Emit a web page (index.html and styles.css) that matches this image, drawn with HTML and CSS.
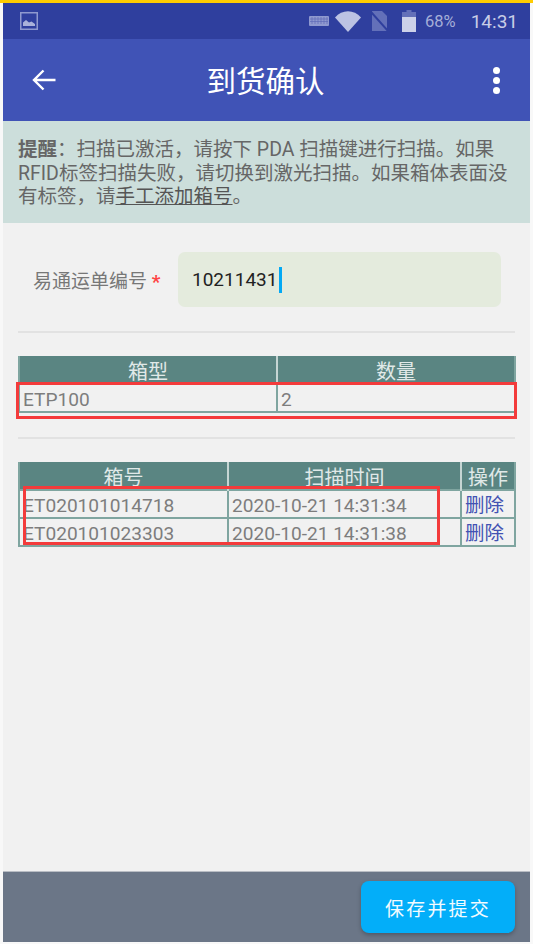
FILE: index.html
```html
<!DOCTYPE html>
<html lang="zh-CN">
<head>
<meta charset="UTF-8">
<title>到货确认</title>
<link rel="stylesheet" href="styles.css">
</head>
<body>

<div class="frame">

    <div class="status-bar">
        <svg class="ic-picture" width="18" height="18" viewBox="0 0 18 18">
            <rect x="0.75" y="0.75" width="16.5" height="16.5" fill="none" stroke="#8f99cf" stroke-width="1.5"/>
            <path d="M3 14V10.5L6 8L9 10.5L11.5 9.5L15 12V14Z" fill="#a9b1da"/>
        </svg>
        <div class="status-right">
            <svg class="ic-keyboard" width="20" height="10" viewBox="0 0 20 10">
                <rect width="20" height="10" rx="1" fill="#8f99cf"/>
                <path d="M1 3H19M1 5.5H19M3 1V8M6 1V8M9 1V8M12 1V8M15 1V8M18 1V8" stroke="#5e6bb7" stroke-width="0.7"/>
            </svg>
            <svg class="ic-wifi" width="26" height="21" viewBox="0 0 26 21">
                <path d="M0 6.5C7 -1.8 19 -1.8 26 6.5L13 21Z" fill="#bcc3e3"/>
            </svg>
            <svg class="ic-sim" width="17" height="20" viewBox="0 0 17 20">
                <path d="M1 0H11L16 5V20H1Z" fill="#6370b9"/>
                <path d="M0 1L17 20" stroke="#2f3f9e" stroke-width="2"/>
            </svg>
            <svg class="ic-battery" width="14" height="22" viewBox="0 0 14 22">
                <path d="M4.5 0H9.5V2H14V22H0V2H4.5Z" fill="#6370b9"/>
                <rect y="7" width="14" height="15" fill="#ccd1e9"/>
            </svg>
            <span class="battery-text">68%</span>
            <span class="clock">14:31</span>
        </div>
    </div>

    <div class="app-bar">
        <svg class="ic-back" width="24" height="22" viewBox="0 0 24 22">
            <path d="M23.5 11H2M11.5 1.5L2 11L11.5 20.5" fill="none" stroke="#fff" stroke-width="2.4"/>
        </svg>
        <h1>到货确认</h1>
        <div class="more">
            <span></span><span></span><span></span>
        </div>
    </div>

    <div class="notice">
        <b>提醒</b>&#xFF1A;扫描已激活&#xFF0C;请按下 PDA 扫描键进行扫描。如果<br>RFID标签扫描失败&#xFF0C;请切换到激光扫描。如果箱体表面没<br>有标签&#xFF0C;请<u>手工添加箱号</u>。
    </div>

    <div class="content">

        <div class="form-row">
            <label>易通运单编号 <em>*</em></label>
            <div class="input"><span>10211431</span><i class="caret"></i></div>
        </div>

        <div class="line line-a"></div>

        <div class="table-wrap">
            <table class="grid">
                <colgroup><col class="c-type"><col></colgroup>
                <tr><th><div>箱型</div></th><th><div>数量</div></th></tr>
                <tr><td>ETP100</td><td>2</td></tr>
            </table>
            <div class="mark mark-a"></div>
        </div>

        <div class="line line-b"></div>

        <div class="table-wrap">
            <table class="grid">
                <colgroup><col class="c-no"><col class="c-time"><col></colgroup>
                <tr><th><div>箱号</div></th><th><div>扫描时间</div></th><th><div>操作</div></th></tr>
                <tr><td>ET020101014718</td><td>2020-10-21 14:31:34</td><td><a>删除</a></td></tr>
                <tr><td>ET020101023303</td><td>2020-10-21 14:31:38</td><td><a>删除</a></td></tr>
            </table>
            <div class="mark mark-b"></div>
        </div>

    </div>

    <div class="footer">
        <button>保存并提交</button>
    </div>

</div>

</body>
</html>
```

FILE: styles.css
```css
*{
    box-sizing:border-box;
}

html,body{
    margin:0;
    height:944px;
    overflow:hidden;
}

body{
    background:#f8f8f8;
    border-top:3px solid #ffcc00;
    padding:0 3px;
    font-family:"Roboto","Noto Sans CJK SC",sans-serif;
}

.frame{
    height:939px;
    display:flex;
    flex-direction:column;
    background:#f1f1f1;
}

/* status bar */
.status-bar{
    height:36px;
    flex:none;
    background:#2f3f9e;
    display:flex;
    align-items:center;
    justify-content:space-between;
    padding:0 12px 0 17px;
}

.status-right{
    display:flex;
    align-items:center;
}

.ic-keyboard{ margin-right:6px; }
.ic-wifi{ margin-right:10px; }
.ic-sim{ margin-right:14px; }
.ic-battery{ margin-right:9px; }

.battery-text{
    font-size:16.5px;
    color:#a5aed8;
    margin-right:15px;
}

.clock{
    font-size:19px;
    color:#c8cde6;
}

/* app bar */
.app-bar{
    height:82px;
    flex:none;
    background:#4053b6;
    display:flex;
    align-items:center;
    justify-content:space-between;
    padding:0 30px 0 29px;
}

.app-bar h1{
    margin:0 18px 3px 0;
    font-size:29.5px;
    font-weight:400;
    color:#fff;
}

.more{
    display:flex;
    flex-direction:column;
    gap:3px;
}

.more span{
    width:7px;
    height:7px;
    border-radius:50%;
    background:#fff;
}

/* notice */
.notice{
    height:102px;
    flex:none;
    background:#ccdedb;
    color:#666;
    font-size:19.5px;
    line-height:23.5px;
    padding:17px 0 0 15px;
    white-space:nowrap;
}

.notice b{
    font-weight:700;
}

.notice u{
    color:#555;
}

/* content */
.content{
    flex:1;
    padding:29px 14px 0;
}

.form-row{
    display:flex;
    align-items:center;
    height:55px;
}

.form-row label{
    width:161px;
    padding-left:16px;
    font-size:19px;
    color:#777;
    white-space:nowrap;
}

.form-row em{
    color:#f44;
    font-style:normal;
    font-weight:700;
}

.input{
    width:323px;
    height:55px;
    background:#e4ebdd;
    border-radius:7px;
    display:flex;
    align-items:center;
    padding-left:14px;
    font-size:19px;
    color:#222;
}

.caret{
    width:2.5px;
    height:26px;
    margin-left:2px;
    background:#03a9f4;
}

.line{
    height:2px;
    background:#e2e2e2;
    margin-left:1px;
    margin-right:1px;
}

.line-a{ margin-top:24px; margin-bottom:23px; }
.line-b{ margin-top:24px; margin-bottom:23px; }

/* tables */
.table-wrap{
    position:relative;
    margin-left:1px;
    width:498px;
}

.grid{
    width:100%;
    border-collapse:collapse;
    table-layout:fixed;
    border:2px solid #7fa5a0;
    border-top:0;
}

.c-type{ width:258px; }
.c-no{ width:209px; }
.c-time{ width:233px; }

.grid th{
    height:27px;
    padding:0;
    background:#5a8582;
    border-left:2px solid #c5d5d3;
    font-weight:400;
    font-size:20px;
    color:#e0e9e8;
}

.grid th:first-child{
    border-left:0;
}

.grid th div{
    height:27px;
    line-height:32px;
    overflow:hidden;
}

.grid td{
    height:28px;
    padding:3px 0 0 3px;
    border:2px solid #7fa5a0;
    font-size:19.1px;
    line-height:23px;
    color:#7d7d7d;
    white-space:nowrap;
    overflow:hidden;
}

.grid a{
    color:#4353b3;
    font-size:19.5px;
    line-height:20px;
    display:block;
}

/* red marks over the screenshot */
.mark{
    position:absolute;
    border:3px solid #f33b3b;
}

.mark-a{
    left:-2px;
    top:26px;
    width:501px;
    height:37px;
}

.mark-b{
    left:5px;
    top:24px;
    width:417px;
    height:59px;
}

/* footer */
.footer{
    height:71px;
    flex:none;
    background:#6b7687;
    border-top:1px solid #b9bdc4;
    display:flex;
    justify-content:flex-end;
    padding:9px 15px 0 0;
}

.footer button{
    width:154px;
    height:52px;
    border:none;
    border-radius:8px;
    background:#03aef9;
    color:#f2fbff;
    font-family:inherit;
    font-size:19px;
    letter-spacing:2.2px;
    box-shadow:0 2px 4px rgba(0,0,0,.25);
}
```
